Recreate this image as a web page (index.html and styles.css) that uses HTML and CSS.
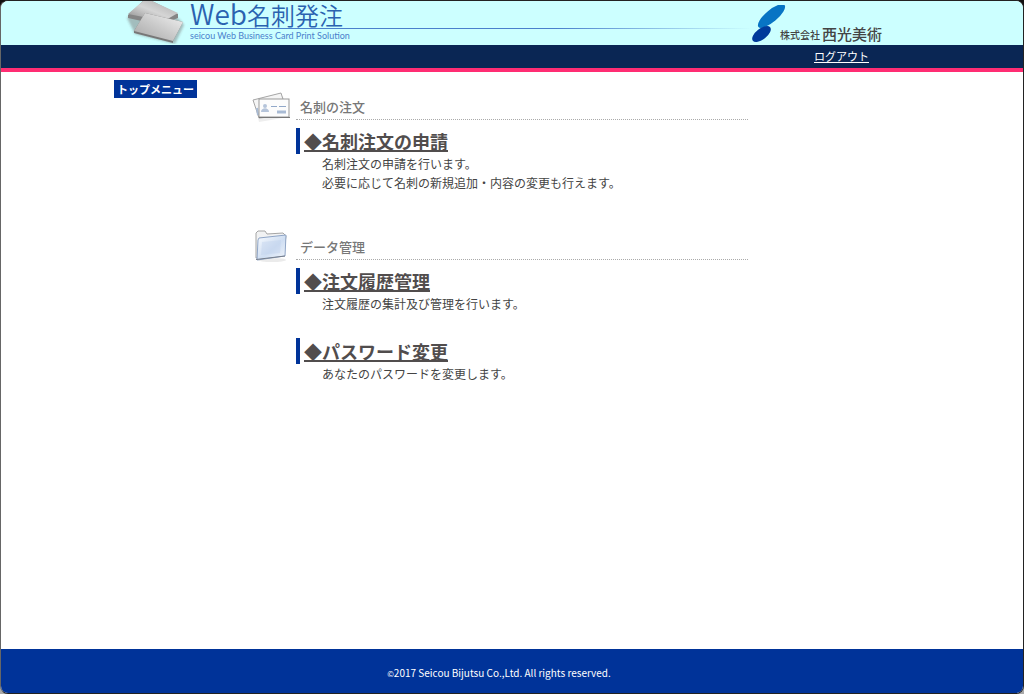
FILE: index.html
```html
<!DOCTYPE html>
<html lang="ja">
<head>
<meta charset="utf-8">
<meta name="viewport" content="width=device-width, initial-scale=1">
<title>Web名刺発注</title>
<link rel="stylesheet" href="styles.css">
</head>
<body>
<div class="window">
  <header class="header">
    <div class="container brand">
      <svg class="brand-cards" viewBox="0 0 62 43" aria-hidden="true">
        <defs>
          <linearGradient id="cardBack" x1="0" y1="1" x2="1" y2="0"><stop offset="0" stop-color="#888"/><stop offset=".5" stop-color="#d5d5d5"/><stop offset="1" stop-color="#aaa"/></linearGradient>
          <linearGradient id="cardFront" x1="0" y1="1" x2="1" y2="0"><stop offset="0" stop-color="#a5a5a5"/><stop offset=".5" stop-color="#cacaca"/><stop offset="1" stop-color="#f3f3f3"/></linearGradient>
          <filter id="soft"><feGaussianBlur stdDeviation="1"/></filter>
        </defs>
        <path d="M3 17 20 3 55 18 60 24 51 43 11 33Z" fill="#544" fill-opacity=".35" filter="url(#soft)"/>
        <path d="M4 14 19 0H28L54 13V17L36 24 4 17Z" fill="#858585"/>
        <path d="M4 13 19 0H28L54 12 40 20Z" fill="url(#cardBack)"/>
        <path d="M10 30 21 12 59 21 49 40V42L10 32Z" fill="#777"/>
        <path d="M10 30 21 12 59 21 49 40Z" fill="url(#cardFront)"/>
      </svg>
      <div class="brand-text">
        <h1 class="brand-title"><span class="brand-latin">Web</span>名刺発注</h1>
        <div class="brand-rule"></div>
        <p class="brand-sub">seicou Web Business Card Print Solution</p>
      </div>
      <div class="company">
        <svg class="company-mark" viewBox="0 0 34 38" aria-hidden="true">
          <ellipse cx="19.500" cy="11" rx="17" ry="6" transform="rotate(-40 19.500 11)" fill="#0874c4"/>
          <ellipse cx="9.500" cy="29" rx="11" ry="5.500" transform="rotate(-38 9.500 29)" fill="#003a9b"/>
        </svg>
        <span class="company-kind">株式会社</span><span class="company-name">西光美術</span>
      </div>
    </div>
  </header>
  <nav class="navbar">
    <div class="container nav-inner"><a class="logout" href="#">ログアウト</a></div>
  </nav>
  <div class="container content">
    <aside class="side"><span class="side-title">トップメニュー</span></aside>
    <main class="main">
      <section class="section">
        <div class="section-head">
          <svg class="section-icon" viewBox="-2 -8 40 48" aria-hidden="true">
            <path d="M3 16 31 8 36 29 7 34Z" fill="#ddd" opacity=".5"/>
            <path d="M1 12 29 5 36 27 7 30Z" fill="#f5f5f5" stroke="#a5a5a5"/>
            <path d="m5 20 1 7" stroke="#a9bbd4" stroke-width="2"/>
            <rect x="7" y="11" width="30" height="18" fill="#fcfcfc" stroke="#999"/>
            <path d="M7 29.500H38" stroke="#777"/>
            <circle cx="13" cy="18" r="2" fill="#b5c4da"/><path d="M9 24c0-5 8-5 8 0Z" fill="#b5c4da"/>
            <path d="M19 18.500h6M27 18.500h7" stroke="#91a8c9"/><path d="M25 24h9" stroke="#a9bbd4" stroke-width="3"/>
          </svg>
          <h2 class="section-title">名刺の注文</h2>
        </div>
        <div class="item">
          <h3 class="item-title"><a class="item-link" href="#">◆名刺注文の申請</a></h3>
          <p class="item-text">名刺注文の申請を行います。<br>必要に応じて名刺の新規追加・内容の変更も行えます。</p>
        </div>
      </section>
      <section class="section">
        <div class="section-head">
          <svg class="section-icon" viewBox="-2 -8 40 48" aria-hidden="true">
            <defs>
              <linearGradient id="folder" x1="0" y1="0" x2="1" y2="1"><stop offset="0" stop-color="#f8fbff"/><stop offset=".55" stop-color="#cfdef2"/><stop offset="1" stop-color="#f2f6fc"/></linearGradient>
            </defs>
            <ellipse cx="20" cy="32" rx="14" ry="2" fill="#ddd" opacity=".6"/>
            <path d="M4 30V5L6 3H13L15 6 31 5 34 8 31 28Z" fill="#f1f2f3" stroke="#a5a5a5"/>
            <path d="M5 32 6 12 7 10 34 7 33 28Z" fill="url(#folder)" stroke="#8fa5c6"/>
            <path d="M9 27 10 14 29 12 28 25Z" fill="#bdd0ec" opacity=".4"/>
            <path d="M4 31.500 33 28" stroke="#777f8c" fill="none"/>
          </svg>
          <h2 class="section-title">データ管理</h2>
        </div>
        <div class="item">
          <h3 class="item-title"><a class="item-link" href="#">◆注文履歴管理</a></h3>
          <p class="item-text">注文履歴の集計及び管理を行います。</p>
        </div>
        <div class="item">
          <h3 class="item-title"><a class="item-link" href="#">◆パスワード変更</a></h3>
          <p class="item-text">あなたのパスワードを変更します。</p>
        </div>
      </section>
    </main>
  </div>
  <footer class="footer"><small class="copyright"><span class="copy-mark">©</span>2017 Seicou Bijutsu Co.,Ltd. All rights reserved.</small></footer>
</div>
</body>
</html>
```
FILE: styles.css
```css
* { box-sizing: border-box; }

body {
  margin: 0;
  background: linear-gradient(#111 50%, #aaa 50%);
  color: #444;
  font-family: "Noto Sans CJK JP", sans-serif;
  font-size: 12px;
  line-height: 19px;
}

h1, h2, h3, p { margin: 0; }

.window {
  display: flex;
  flex-direction: column;
  min-height: 100vh;
  border: 1px solid #222;
  border-left-color: #666;
  border-radius: 8px;
  overflow: hidden;
  background: #fff;
}

.container {
  width: 100%;
  max-width: 770px;
  margin: 0 auto;
}

.header, .navbar, .footer { padding-right: 26px; }

.header {
  height: 44px;
  background: #cff;
}

.brand {
  display: flex;
  height: 100%;
}

.brand-cards {
  flex: none;
  width: 62px;
  height: 43px;
  margin-left: 10px;
}

.brand-text {
  flex: 1;
  padding-left: 4px;
}

.brand-title {
  color: #2a62b0;
  font-size: 24px;
  font-weight: 350;
  line-height: 27px;
  white-space: nowrap;
}

.brand-latin {
  font-size: 28px;
  line-height: 24px;
}

.brand-rule {
  height: 1px;
  background: linear-gradient(90deg, #4a80cc 65%, #cff);
}

.brand-sub {
  color: #4a80cc;
  font-family: Lato, sans-serif;
  font-size: 9px;
  line-height: 13px;
}

.company {
  display: flex;
  align-items: flex-end;
  padding: 0 2px 1px 0;
  color: #444;
  font-weight: 500;
  white-space: nowrap;
}

.company-mark {
  width: 34px;
  height: 38px;
  margin: 0 -6px 1px 0;
}

.company-kind {
  font-size: 10px;
  line-height: 19px;
}

.company-name {
  margin-left: 2px;
  font-size: 15px;
  line-height: 20px;
}

.navbar {
  border-bottom: 4px solid #ff2d73;
  background: #0a2654;
}

.nav-inner {
  display: flex;
  justify-content: flex-end;
  padding: 2px 15px 2px 0;
}

.logout {
  color: #fff;
  font-size: 11px;
}

.content {
  display: flex;
  flex: 1;
  max-width: 796px;
  padding: 8px 26px 0 0;
}

.side {
  width: 136px;
  flex: none;
}

.side-title {
  display: inline-block;
  padding: 0 3px;
  background: #039;
  color: #fff;
  font-size: 11px;
  font-weight: 700;
  line-height: 18px;
  vertical-align: top;
}

.main {
  flex: 1;
  max-width: 498px;
}

.section { padding-bottom: 11px; }

.section-head {
  display: flex;
  align-items: flex-end;
  height: 40px;
}

.section-icon {
  flex: none;
  align-self: flex-start;
  width: 40px;
  height: 48px;
  margin-right: 6px;
}

.section-title {
  flex: 1;
  padding: 0 4px 3px;
  border-bottom: 1px dotted #aaa;
  color: #777;
  font-size: 13px;
  font-weight: 500;
}

.item { padding: 8px 0 17px 46px; }

.item-title {
  padding-left: 4px;
  border-left: 4px solid #039;
  font-size: 18px;
  line-height: 26px;
}

.item-link {
  color: #514d4d;
  text-decoration-thickness: 2px;
}

.item-text { padding-left: 26px; }

.footer {
  padding-top: 14px;
  padding-bottom: 10px;
  background: #039;
  color: #fff;
  text-align: center;
}

.copyright {
  display: block;
  font-size: 10px;
}

.copy-mark { font-size: 8px; }
```
